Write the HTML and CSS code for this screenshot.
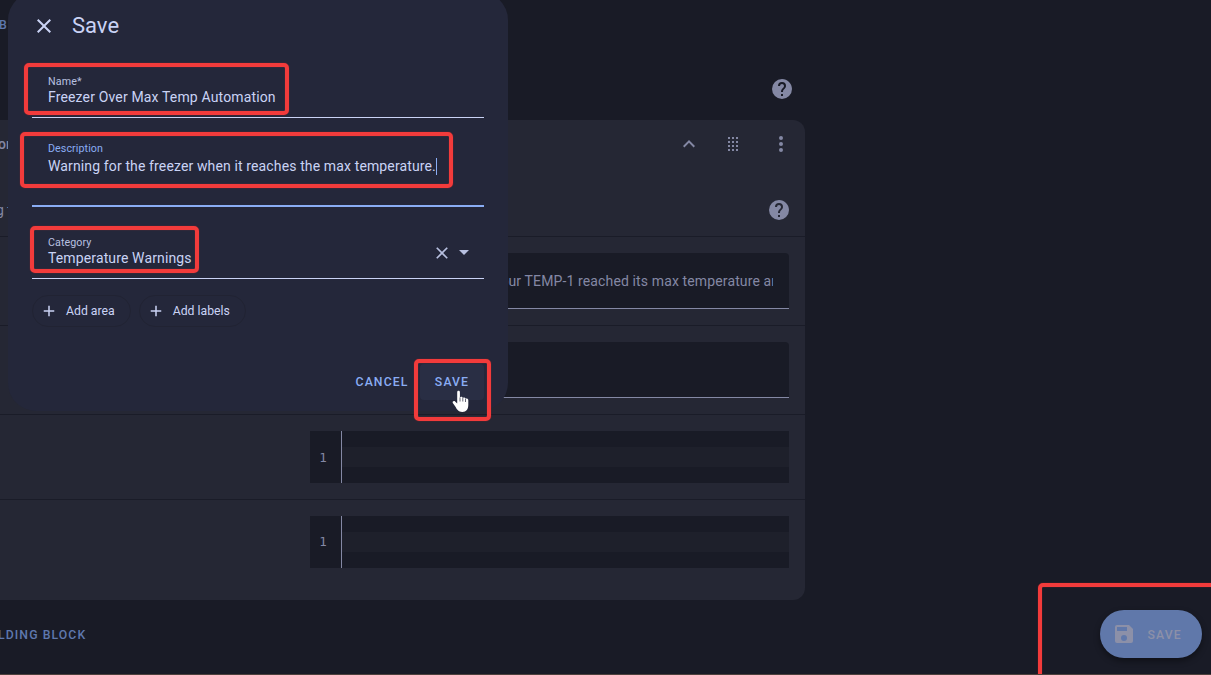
FILE: index.html
```html
<!DOCTYPE html>
<html lang="en">
<head>
<meta charset="utf-8">
<title>Save automation</title>
<link rel="stylesheet" href="styles.css">
</head>
<body>
<main class="page">
  <div class="intro">
    <span class="link top-link">B</span>
    <svg class="icon help" viewBox="0 0 24 24"><path d="M15.07,11.25L14.17,12.17C13.45,12.89 13,13.5 13,15H11V14.5C11,13.39 11.45,12.39 12.17,11.67L13.41,10.41C13.78,10.05 14,9.55 14,9C14,7.89 13.1,7 12,7A2,2 0 0,0 10,9H8A4,4 0 0,1 12,5A4,4 0 0,1 16,9C16,9.88 15.64,10.67 15.07,11.25M13,19H11V17H13M12,2A10,10 0 0,0 2,12A10,10 0 0,0 12,22A10,10 0 0,0 22,12C22,6.47 17.5,2 12,2Z"/></svg>
  </div>
  <section class="card">
    <header class="card-head">
      <span class="card-title">or</span>
      <svg class="icon" viewBox="0 0 24 24"><path d="M7.41,15.41L12,10.83L16.59,15.41L18,14L12,8L6,14L7.41,15.41Z"/></svg>
      <svg class="icon drag" viewBox="0 0 24 24"><path d="M7 5h2v2H7zM11 5h2v2h-2zM15 5h2v2h-2zM7 9h2v2H7zM11 9h2v2h-2zM15 9h2v2h-2zM7 13h2v2H7zM11 13h2v2h-2zM15 13h2v2h-2zM7 17h2v2H7zM11 17h2v2h-2zM15 17h2v2h-2z"/></svg>
      <svg class="icon more" viewBox="0 0 24 24"><path d="M12,16A2,2 0 0,1 14,18A2,2 0 0,1 12,20A2,2 0 0,1 10,18A2,2 0 0,1 12,16M12,10A2,2 0 0,1 14,12A2,2 0 0,1 12,14A2,2 0 0,1 10,12A2,2 0 0,1 12,10M12,4A2,2 0 0,1 14,6A2,2 0 0,1 12,8A2,2 0 0,1 10,6A2,2 0 0,1 12,4Z"/></svg>
    </header>
    <div class="card-info">
      <span class="info-text">g t</span>
      <svg class="icon help" viewBox="0 0 24 24"><path d="M15.07,11.25L14.17,12.17C13.45,12.89 13,13.5 13,15H11V14.5C11,13.39 11.45,12.39 12.17,11.67L13.41,10.41C13.78,10.05 14,9.55 14,9C14,7.89 13.1,7 12,7A2,2 0 0,0 10,9H8A4,4 0 0,1 12,5A4,4 0 0,1 16,9C16,9.88 15.64,10.67 15.07,11.25M13,19H11V17H13M12,2A10,10 0 0,0 2,12A10,10 0 0,0 12,22A10,10 0 0,0 22,12C22,6.47 17.5,2 12,2Z"/></svg>
    </div>
    <div class="row"><div class="input"><div class="input-text">our TEMP-1 reached its max temperature and</div></div></div>
    <div class="row"><div class="input"></div></div>
    <div class="row"><div class="editor"><span class="gutter low">1</span><div class="code"><div class="active-line"></div></div></div></div>
    <div class="row"><div class="editor"><span class="gutter">1</span><div class="code"><div class="active-line"></div></div></div></div>
  </section>
  <div class="actions"><span class="link">LDING BLOCK</span></div>
</main>

<button class="fab">
  <svg class="icon" viewBox="0 0 24 24"><path fill-rule="evenodd" d="M17,3H5A2,2 0 0,0 3,5V19A2,2 0 0,0 5,21H19A2,2 0 0,0 21,19V7L17,3M15,9H5V5H15V9M12,19A3,3 0 0,1 9,16A3,3 0 0,1 12,13A3,3 0 0,1 15,16A3,3 0 0,1 12,19Z"/></svg>
  <span>SAVE</span>
</button>

<div class="dialog">
  <header class="dialog-head">
    <svg class="icon" viewBox="0 0 24 24"><path d="M19,6.41L17.59,5L12,10.59L6.41,5L5,6.41L10.59,12L5,17.59L6.41,19L12,13.41L17.59,19L19,17.59L13.41,12L19,6.41Z"/></svg>
    <h1>Save</h1>
  </header>
  <div class="field name">
    <label>Name*</label>
    <div class="value">Freezer Over Max Temp Automation</div>
  </div>
  <div class="field description">
    <label>Description</label>
    <div class="value">Warning for the freezer when it reaches the max temperature.<i class="caret"></i></div>
  </div>
  <div class="field category">
    <div class="texts">
      <label>Category</label>
      <div class="value">Temperature Warnings</div>
    </div>
    <svg class="icon clear" viewBox="0 0 24 24"><path d="M19,6.41L17.59,5L12,10.59L6.41,5L5,6.41L10.59,12L5,17.59L6.41,19L12,13.41L17.59,19L19,17.59L13.41,12L19,6.41Z"/></svg>
    <svg class="icon arrow" viewBox="0 0 24 24"><path d="M7,10L12,15L17,10H7Z"/></svg>
  </div>
  <div class="chips">
    <span class="chip"><svg class="icon" viewBox="0 0 24 24"><path d="M19,13H13V19H11V13H5V11H11V5H13V11H19V13Z"/></svg>Add area</span>
    <span class="chip"><svg class="icon" viewBox="0 0 24 24"><path d="M19,13H13V19H11V13H5V11H11V5H13V11H19V13Z"/></svg>Add labels</span>
  </div>
  <footer class="dialog-foot">
    <button class="btn">CANCEL</button>
    <button class="btn hover">SAVE</button>
  </footer>
</div>

<div class="mark mark-name"></div>
<div class="mark mark-description"></div>
<div class="mark mark-category"></div>
<div class="mark mark-save"></div>
<div class="mark mark-fab"></div>
<div class="edge"></div>
<svg class="pointer" viewBox="0 0 18 23"><path d="M5.2 2.2C5.2.4 7.9.4 7.9 2.2V7.6C8.3 6.5 10.6 6.6 10.7 8C11.3 7.1 13.3 7.3 13.5 8.8C14.6 8.2 16.3 8.8 16.3 10.3V14.8C16.3 19 14.3 22 10.3 22C6.4 22 5 19.7 3.3 16.6L.8 13C.1 11.6 1.8 10.4 3.1 11.5L5.2 13.5Z" fill="#fff"/><path d="M8 7.5v4M10.8 8v3.5M13.5 9v3" stroke="#24273a" stroke-width=".7" fill="none"/></svg>
</body>
</html>
```

FILE: styles.css
```css
* { box-sizing: border-box; }
body {
  margin: 0;
  position: relative;
  width: 1211px;
  height: 675px;
  overflow: hidden;
  background: #191b26;
  font-family: Roboto, "Noto Sans", sans-serif;
  color: #cad3f5;
}
.icon { display: block; width: 24px; height: 24px; fill: currentColor; flex: none; }
.page { width: 805px; color: #8488a4; }
.intro { height: 120px; padding: 15px 11px 0 0; display: flex; flex-direction: column; }
.link { font-size: 12.25px; font-weight: 500; letter-spacing: 1.09px; line-height: 20px; color: #5f78ae; }
.top-link { margin-left: -1px; }
.intro .help { align-self: flex-end; margin-top: 42px; }
.card { height: 480px; background: #252734; border-radius: 0 12px 12px 0; }
.card-head { height: 48px; display: flex; align-items: center; padding-right: 12px; }
.card-title { flex: 1; font-size: 14px; font-weight: 500; margin-left: -2px; }
.drag { margin-left: 20px; }
.more { margin-left: 24px; }
.card-info { height: 68px; display: flex; justify-content: space-between; align-items: center; padding: 16px 14px 0 0; }
.info-text { font-size: 14px; margin-left: -4px; }
.row { border-top: 1px solid #1a1c28; padding: 16px 16px 16px 310px; }
.input { height: 56px; background: #191b26; border-bottom: 1px solid #8488a4; border-radius: 4px 4px 0 0; padding: 0 16px; }
.input-text { overflow: hidden; white-space: nowrap; padding-left: 174.4px; font-size: 14px; line-height: 56px; letter-spacing: .13px; }
.editor { height: 52px; display: flex; background: #191b26; }
.gutter { width: 32px; border-right: 1px solid #8488a4; padding-right: 5px; text-align: center; line-height: 52px; font-family: "DejaVu Sans Mono", monospace; font-size: 12.5px; }
.gutter.low { line-height: 54px; }
.code { flex: 1; padding-top: 16px; }
.active-line { height: 20px; background: #1e202b; }
.actions { padding-top: 24px; }
.actions .link { margin-left: -2px; }

.fab {
  position: absolute; left: 1100px; top: 610px; width: 102px; height: 48px;
  display: flex; align-items: center; gap: 11.5px; padding: 1px 0 0 12px;
  border: 0; border-radius: 24px; background: #6078aa; color: #8c90a8;
  font: 500 12.25px Roboto, sans-serif; letter-spacing: 1.1px;
  box-shadow: 0 3px 6px #0006;
}
.fab .icon { margin-top: -1px; }

.dialog {
  position: absolute; left: 8px; top: -8px; width: 500px; height: 419px;
  padding: 8px 24px 0; background: #24273a; border-radius: 28px;
}
.dialog-head { height: 62px; display: flex; gap: 16px; padding-top: 10px; align-items: flex-start; }
.dialog-head .icon { margin-top: 4px; }
.dialog-head h1 { margin: 0; font-size: 22px; font-weight: 400; line-height: 31px; }
.field { padding: 0 16px; border-bottom: 1px solid #cad3f5; white-space: nowrap; }
.field label { display: block; font-size: 10.7px; line-height: 14px; color: #b8c0e0; letter-spacing: .08px; }
.value { font-size: 14px; line-height: 18px; letter-spacing: .13px; }
.name { height: 56px; padding-top: 13px; }
.name .value { letter-spacing: .15px; }
.name label { letter-spacing: .15px; }
.name .value, .category .value { margin-top: -1px; }
.description { height: 89px; padding-top: 24px; border-bottom: 2px solid #8aadf4; }
.description label { color: #8aadf4; }
.description .value { margin-top: 1px; display: flex; align-items: center; }
.caret { width: 1px; height: 17px; background: #8aadf4; margin-left: 0; }
.category { height: 72px; display: flex; padding-top: 29px; }
.texts { flex: 1; }
.category .icon { color: #b8c0e0; }
.category .clear { margin: 7px 0 0; width: 20px; height: 20px; }
.arrow { margin: 4px -8px 0 0; }
.chips { display: flex; gap: 8px; padding-top: 16px; }
.chip { height: 32px; display: flex; align-items: center; gap: 8px; padding: 0 15px 0 8px; border: 1px solid #212333; border-radius: 16px; font-size: 12.25px; }
.chip .icon { width: 18px; height: 18px; margin: 0 0 0 -1px; }
.dialog-foot { display: flex; justify-content: flex-end; gap: 3.5px; padding: 37px 0 0; }
.btn { height: 36px; padding: 0 8px; border: 0; border-radius: 4px; background: none; color: #8aadf4; font: 500 12.25px Roboto, sans-serif; letter-spacing: 1.1px; }
.btn.hover { width: 64px; background: #292e44; }

.mark { position: absolute; border: 4px solid #f23b3b; border-radius: 5px; box-shadow: 0 0 1px 0 #c22, inset 0 0 1px #a33; }
.mark-name { left: 24px; top: 63px; width: 265px; height: 52px; }
.mark-description { left: 20px; top: 132px; width: 433px; height: 56px; }
.mark-category { left: 30px; top: 226px; width: 169px; height: 47px; }
.mark-save { left: 414px; top: 359px; width: 77px; height: 62px; }
.mark-fab { left: 1038px; top: 583px; width: 180px; height: 100px; }
.edge { position: absolute; left: 0; top: 674px; width: 1211px; height: 1px; background: #4d413d; }
.pointer { position: absolute; left: 452px; top: 390px; width: 18px; height: 23px; }
```
